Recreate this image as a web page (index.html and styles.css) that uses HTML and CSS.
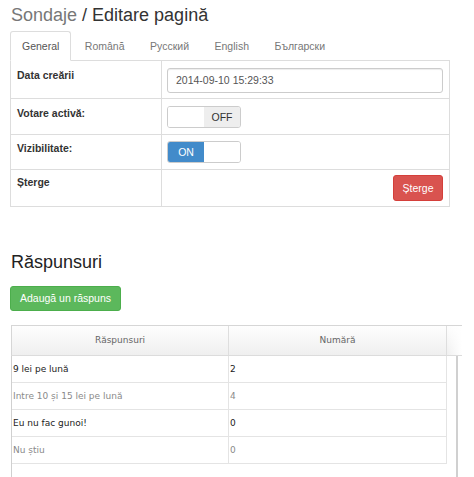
FILE: index.html
```html
<!DOCTYPE html>
<html lang="ro">
<head>
<meta charset="utf-8">
<title>Sondaje / Editare pagină</title>
<link rel="stylesheet" href="styles.css">
</head>
<body>
<div class="page">
  <h3 class="title"><span class="muted">Sondaje</span> / Editare pagină</h3>

  <ul class="tabs">
    <li class="tab active">General</li>
    <li class="tab">Română</li>
    <li class="tab">Русский</li>
    <li class="tab">English</li>
    <li class="tab">Български</li>
  </ul>

  <div class="form-grid">
    <div class="cell label row1">Data creării</div>
    <div class="cell field row1"><div class="input">2014-09-10 15:29:33</div></div>

    <div class="cell label row2">Votare activă:</div>
    <div class="cell field row2">
      <div class="switch">
        <span class="half blank"></span>
        <span class="half off">OFF</span>
      </div>
    </div>

    <div class="cell label row3">Vizibilitate:</div>
    <div class="cell field row3">
      <div class="switch">
        <span class="half on">ON</span>
        <span class="half blank"></span>
      </div>
    </div>

    <div class="cell label row4 last">Șterge</div>
    <div class="cell field row4 last right"><button class="btn btn-danger">Șterge</button></div>
  </div>

  <h3 class="section">Răspunsuri</h3>
  <button class="btn btn-success">Adaugă un răspuns</button>

  <div class="grid">
    <div class="grid-head">
      <div class="hcell c1">Răspunsuri</div>
      <div class="hcell c2">Numără</div>
      <div class="hcell c3"></div>
    </div>
    <div class="grid-body">
      <div class="grow odd"><div class="gcell c1">9 lei pe lună</div><div class="gcell c2">2</div></div>
      <div class="grow even"><div class="gcell c1">Intre 10 și 15 lei pe lună</div><div class="gcell c2">4</div></div>
      <div class="grow odd"><div class="gcell c1">Eu nu fac gunoi!</div><div class="gcell c2">0</div></div>
      <div class="grow even"><div class="gcell c1">Nu știu</div><div class="gcell c2">0</div></div>
    </div>
  </div>
</div>
</body>
</html>
```

FILE: styles.css
```css
* { box-sizing: border-box; }

html, body {
  margin: 0;
  padding: 0;
  background: #fff;
  overflow: hidden;
}

body {
  font-family: "Liberation Sans", Arial, sans-serif;
  font-size: 10.5px;
  line-height: 15px;
  color: #333;
}

.page {
  padding: 5px 10px 0 10px;
}

.title {
  margin: 0 0 6px 1px;
  font-size: 18px;
  line-height: 20px;
  font-weight: normal;
  color: #333;
}

.muted { color: #777; }

/* tabs */
.tabs {
  list-style: none;
  margin: 0;
  padding: 0;
  width: 440px;
  display: flex;
  border-bottom: 1px solid #ddd;
  height: 30px;
}

.tab {
  height: 30px;
  margin-right: 1.5px;
  margin-bottom: -1px;
  padding: 7px 11px 7px 11px;
  line-height: 15px;
  border: 1px solid transparent;
  border-radius: 3px 3px 0 0;
  color: #777;
  white-space: nowrap;
}

.tab.active {
  color: #555;
  background: #fff;
  border-color: #ddd;
  border-bottom-color: #fff;
}

/* form grid */
.form-grid {
  width: 440px;
  display: grid;
  grid-template-columns: 151px 1fr;
  border-left: 1px solid #ddd;
  border-right: 1px solid #ddd;
}

.cell {
  border-bottom: 1px solid #ddd;
  padding: 6px 6px 6px 6px;
}

.cell.label {
  border-right: 1px solid #ddd;
  font-weight: bold;
  color: #333;
}

.cell.field { padding-left: 5px; }

.row1 { padding-top: 7px; padding-bottom: 5px; }
.row2 { padding-top: 7px; padding-bottom: 6px; }
.row3 { padding-top: 6px; padding-bottom: 6px; }
.row4 { padding-top: 5px; padding-bottom: 5px; }

.right {
  display: flex;
  justify-content: flex-end;
}

.input {
  height: 25px;
  border: 1px solid #ccc;
  border-radius: 3px;
  padding: 4px 8px;
  line-height: 15px;
  color: #555;
  box-shadow: inset 0 1px 1px rgba(0,0,0,0.075);
}

.switch {
  width: 74px;
  height: 22px;
  border: 1px solid #ccc;
  border-radius: 3px;
  overflow: hidden;
  display: flex;
}

.half {
  width: 36px;
  height: 20px;
  line-height: 20px;
  text-align: center;
}

.half.off { background: #eee; color: #333; }
.half.on { background: #428bca; color: #fff; }
.half.blank { background: #fff; }

/* buttons */
.btn {
  display: inline-block;
  font-family: "Liberation Sans", Arial, sans-serif;
  font-size: 10.5px;
  line-height: 15px;
  padding: 4px 9px;
  border: 1px solid transparent;
  border-radius: 3px;
  color: #fff;
  cursor: pointer;
}

.btn-danger {
  background: #d9534f;
  border-color: #d43f3a;
  padding-top: 4.5px;
  padding-bottom: 4.5px;
  width: 50px;
  text-align: center;
  padding-left: 0;
  padding-right: 0;
}

.btn-success {
  background: #5cb85c;
  border-color: #4cae4c;
  width: 111px;
  padding-left: 0;
  padding-right: 0;
  text-align: center;
  display: block;
}

.section {
  margin: 45px 0 14px 1px;
  font-size: 18px;
  line-height: 20px;
  font-weight: normal;
  color: #222;
}

/* grid */
.grid {
  margin-top: 14px;
  margin-left: 1px;
  font-family: "DejaVu Sans", Verdana, sans-serif;
  font-size: 9px;
}

.grid-head {
  display: flex;
  width: 451px;
  height: 31px;
  border-top: 1px solid #d6d6d6;
  border-bottom: 1px solid #dcdcdc;
  border-left: 1px solid #d6d6d6;
  background: linear-gradient(#fefefe, #efefef);
}

.hcell {
  height: 29px;
  line-height: 29px;
  text-align: center;
  color: #666;
}

.hcell.c1 { width: 217px; border-right: 1px solid #dedede; }
.hcell.c2 { width: 218px; border-right: 1px solid #dedede; }
.hcell.c3 {
  flex: 1;
  background: linear-gradient(to right, rgba(255,255,255,0), #fff);
}

.grid-body {
  width: 447px;
  height: 130px;
  border-left: 1px solid #d0d0d0;
  border-right: 2px solid #d0d0d0;
}

.grow {
  display: flex;
  height: 27px;
}

.gcell {
  height: 27px;
  line-height: 26px;
  padding-left: 1px;
  border-bottom: 1px solid #e4e4e4;
  white-space: nowrap;
}

.gcell.c1 { width: 217px; border-right: 1px solid #e4e4e4; }
.gcell.c2 { width: 218px; border-right: 1px solid #e4e4e4; }

.grow.odd .gcell { color: #222; }
.grow.even .gcell { color: #8a8a8a; }
```
